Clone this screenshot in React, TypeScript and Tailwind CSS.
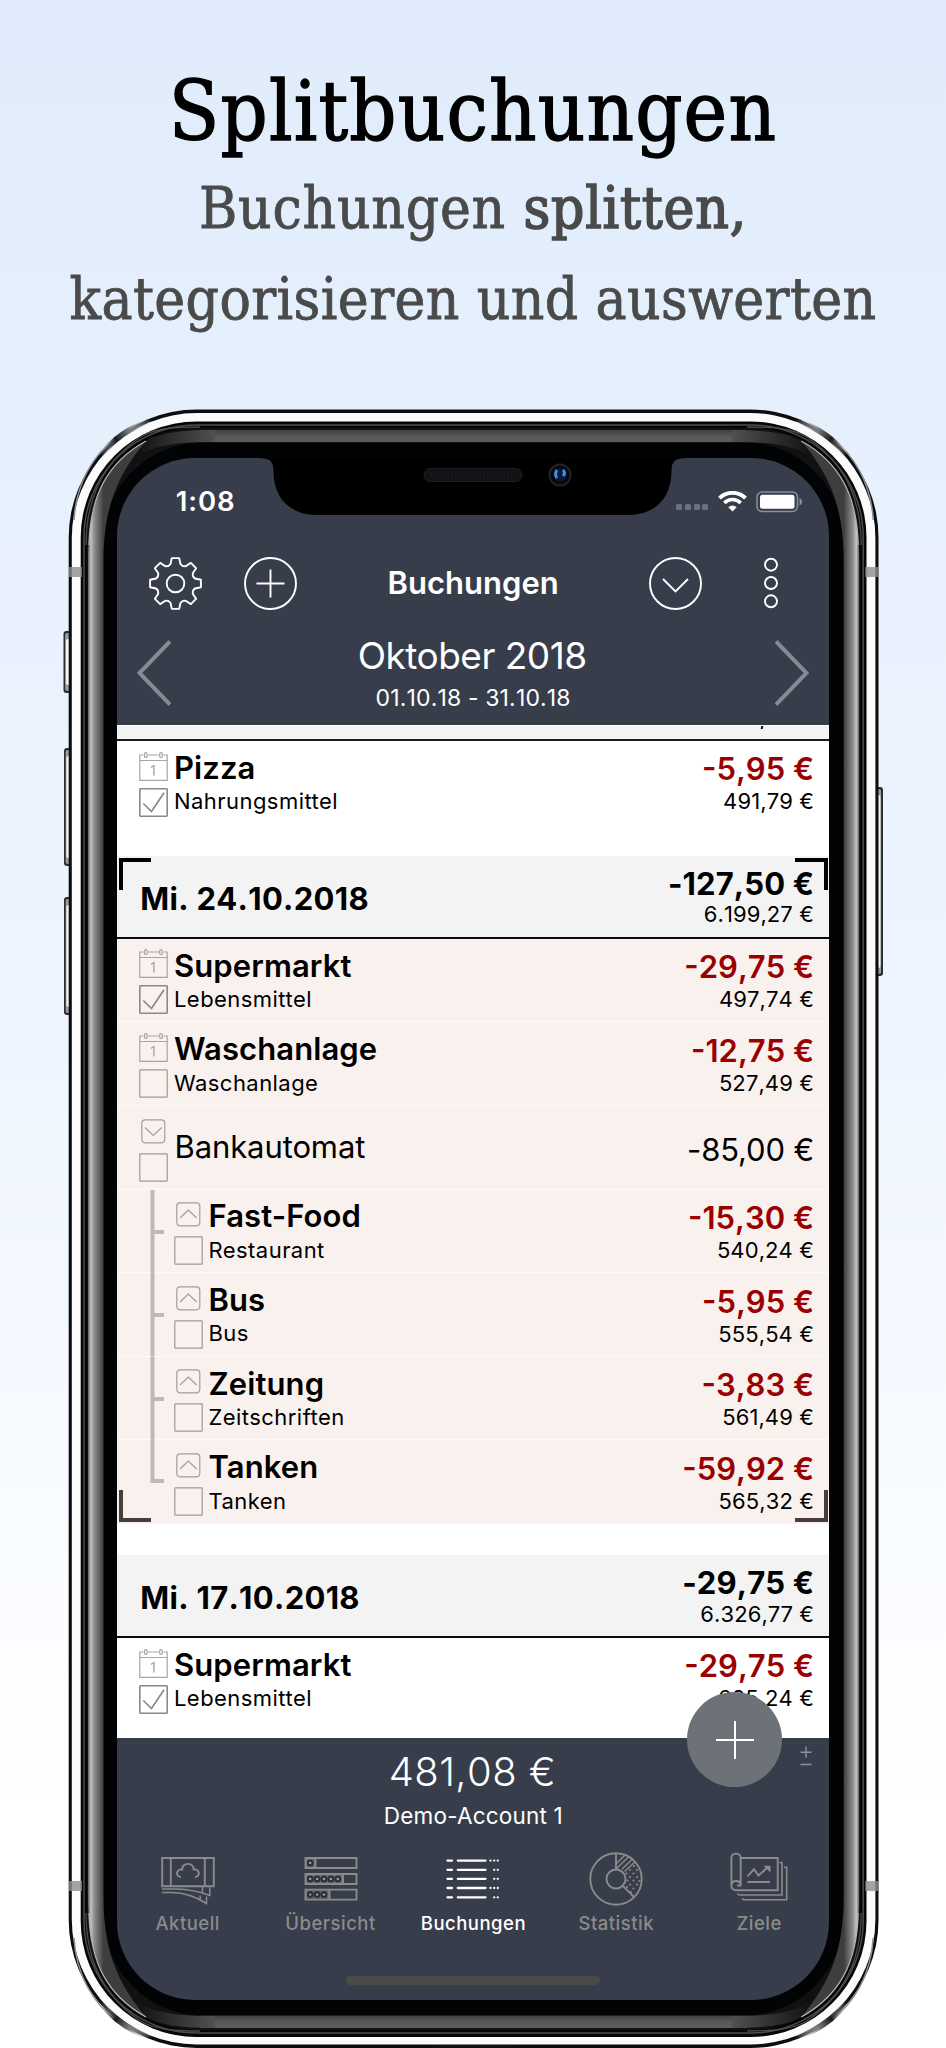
import type { ReactNode } from "react";

type IconKind = "calendar" | "down" | "up";

interface Booking {
  title: string;
  category?: string;
  amount: string;
  balance?: string;
  icon: IconKind;
  checked?: boolean;
  child?: boolean;
  last?: boolean;
}

const bookings: Booking[] = [
  { title: "Supermarkt", category: "Lebensmittel", amount: "-29,75 €", balance: "497,74 €", icon: "calendar", checked: true },
  { title: "Waschanlage", category: "Waschanlage", amount: "-12,75 €", balance: "527,49 €", icon: "calendar" },
  { title: "Bankautomat", amount: "-85,00 €", icon: "down" },
  { title: "Fast-Food", category: "Restaurant", amount: "-15,30 €", balance: "540,24 €", icon: "up", child: true },
  { title: "Bus", category: "Bus", amount: "-5,95 €", balance: "555,54 €", icon: "up", child: true },
  { title: "Zeitung", category: "Zeitschriften", amount: "-3,83 €", balance: "561,49 €", icon: "up", child: true },
  { title: "Tanken", category: "Tanken", amount: "-59,92 €", balance: "565,32 €", icon: "up", child: true, last: true },
];

function gearPath() {
  const pts: string[] = [];
  for (let i = 0; i < 8; i++) {
    const a = (i * Math.PI) / 4;
    for (const [x, y] of [[-7, -17.6], [-5, -19.4], [-3.7, -25.4], [3.7, -25.4], [5, -19.4], [7, -17.6]]) {
      pts.push(`${(x * Math.cos(a) - y * Math.sin(a)).toFixed(2)} ${(x * Math.sin(a) + y * Math.cos(a)).toFixed(2)}`);
    }
  }
  return `M${pts.join("L")}Z`;
}

function FrameCorner() {
  return (
    <g>
      <path d="M74 520 C76 485 92 455 118 436" fill="none" stroke="#8d8f90" strokeWidth="1.500" />
      <path d="M101 456 C112 440 128 428 152 420" fill="none" stroke="url(#streak)" strokeWidth="6" />
      <path d="M86 545 C86 500 102 462 142 436 C158 428 175 427 200 427" fill="none" stroke="#4c4d4e" strokeWidth="1.3" />
      <path d="M146 441 C160 433 180 430 215 430 V442 C180 442 160 444 138 455 Z" fill="url(#fade)" />
      <path d="M88 561 C88 500 106 462 146 441 C122 470 103.500 500 103.500 561 Z" fill="url(#side)" />
      <path d="M146 441 C108 462 90 495 89 545" fill="none" stroke="#b4b5b6" strokeWidth="1.200" />
      <rect x="69" y="567" width="13" height="10" fill="#8f8f8f" opacity="0.8" />
    </g>
  );
}

function SideButton({ x, y, height }: { x: number; y: number; height: number }) {
  return (
    <g>
      <rect x={x} y={y} width="9" height={height} rx="3" fill="#2a2b2c" />
      <rect x={x + 1.6} y={y + 2} width="5.5" height={height - 4} rx="2" fill="#9a9b9c" />
      <rect x={x + 2.4} y={y + 8} width="4" height={height - 16} rx="2" fill="#f4f4f4" />
    </g>
  );
}

function PhoneFrame() {
  return (
    <svg className="absolute inset-0" width="946" height="2048" viewBox="0 0 946 2048">
      <defs>
        <linearGradient id="side" gradientUnits="userSpaceOnUse" x1="88" x2="103.500" y1="0" y2="0">
          <stop offset="0" stopColor="#5c5d5e" />
          <stop offset="0.18" stopColor="#c2c3c4" />
          <stop offset="0.4" stopColor="#8d8e8f" />
          <stop offset="1" stopColor="#3c3e40" />
        </linearGradient>
        <linearGradient id="top" x1="0" x2="0" y1="0" y2="1">
          <stop offset="0" stopColor="#3f4041" />
          <stop offset="0.5" stopColor="#565758" />
          <stop offset="1" stopColor="#5d5e5f" />
        </linearGradient>
        <linearGradient id="fade" x1="0" x2="1" y1="0" y2="0">
          <stop offset="0" stopColor="#121314" />
          <stop offset="1" stopColor="#4f5051" />
        </linearGradient>
        <linearGradient id="streak" gradientUnits="userSpaceOnUse" x1="101" x2="152" y1="456" y2="420">
          <stop offset="0" stopColor="#fff" stopOpacity="0" />
          <stop offset="0.35" stopColor="#1a1b1c" />
          <stop offset="0.6" stopColor="#77797a" />
          <stop offset="1" stopColor="#fff" stopOpacity="0" />
        </linearGradient>
      </defs>
      <SideButton x={63.5} y={631} height={62} />
      <SideButton x={64} y={748} height={118} />
      <SideButton x={64} y={897} height={118} />
      <SideButton x={874} y={787} height={189} />
      <rect x="68.700" y="409.500" width="809.800" height="1638.500" rx="128" fill="#0c0d0e" />
      <rect x="71.800" y="413" width="803.600" height="1631.500" rx="125" fill="#fbfbfb" />
      <rect x="80.700" y="421.500" width="785.800" height="1615.500" rx="116" fill="#050606" />
      <rect x="84" y="425" width="779.200" height="1608" rx="112" fill="none" stroke="#4c4d4e" strokeWidth="1.500" />
      <rect x="87" y="428" width="773.200" height="1602" rx="110" fill="#101112" />
      <rect x="200" y="430" width="547" height="12.500" fill="url(#top)" />
      <rect x="200" y="2015.500" width="547" height="12.500" fill="url(#top)" />
      <rect x="103" y="442.300" width="741.200" height="1573" rx="100" fill="#020305" />
      <rect x="88" y="560" width="15.500" height="1338" fill="url(#side)" />
      <g transform="translate(947.2 0) scale(-1 1)">
        <rect x="88" y="560" width="15.500" height="1338" fill="url(#side)" />
        <FrameCorner />
      </g>
      <FrameCorner />
      <g transform="translate(0 2458) scale(1 -1)">
        <FrameCorner />
      </g>
      <g transform="translate(947.2 2458) scale(-1 -1)">
        <FrameCorner />
      </g>
      <path d="M430 2048 q2 -3 8 -3 h71 q6 0 8 3 Z" fill="#111" />
    </svg>
  );
}

function Notch() {
  return (
    <svg className="absolute left-[137px] top-[-1px]" width="438" height="60" viewBox="254.500 457 438 60">
      <path
        d="M259 457 V458 C270 458 274 461 274 471 C274 498 290 515 318 515 H628 C656 515 672 498 672 471 C672 461 676 458 687 458 V457 Z"
        fill="#000"
      />
      <rect x="424.500" y="468.500" width="98" height="13" rx="6.500" fill="#111214" stroke="#1f2023" />
      <path d="M431 475 H516" stroke="#16171a" strokeWidth="7" strokeDasharray="1.500 2" />
      <circle cx="560.500" cy="475" r="10.500" fill="#07080b" stroke="#232427" strokeWidth="2" />
      <circle cx="560.500" cy="475" r="6.500" fill="#0b1a38" />
      <path d="M557.500 470 Q554.500 474 557.500 478 M563.500 470 Q566.500 473 563.500 476" stroke="#3f8fe8" strokeWidth="3" fill="none" />
    </svg>
  );
}

function StatusBar() {
  return (
    <div className="flex h-[85px] items-center pl-[58.5px] pr-[26.5px] text-white">
      <span className="pt-px text-[27.5px] font-semibold tracking-[0.9px]">1:08</span>
      <div className="ml-auto mt-[13px] flex gap-[2.8px]">
        {[0, 1, 2, 3].map((i) => (
          <span key={i} className="h-[6px] w-[6px] rounded-[1.5px] bg-[#6b707a]" />
        ))}
      </div>
      <svg className="ml-[9.5px] mt-[2px]" width="29" height="21" viewBox="0 0 29 21" fill="none" stroke="#fff">
        <path d="M1.500 7.200 A18.500 18.500 0 0 1 27.500 7.200" strokeWidth="4" />
        <path d="M6.300 12 A11.500 11.500 0 0 1 22.700 12" strokeWidth="3.600" />
        <path d="M10.300 16.200 Q14.500 12.800 18.700 16.200 L14.500 20.500 Z" fill="#fff" stroke="none" />
      </svg>
      <svg className="ml-[9px] mt-[2px]" width="47" height="22" viewBox="0 0 47 22">
        <rect x="1" y="1" width="40.500" height="19.500" rx="5" fill="none" stroke="#8b9099" strokeWidth="1.500" />
        <rect x="4" y="3.800" width="34.500" height="14" rx="2.500" fill="#fff" />
        <path d="M43.500 7 Q46.200 8 46.200 10.800 Q46.200 13.500 43.500 14.500 Z" fill="#8b9099" />
      </svg>
    </div>
  );
}

function Toolbar() {
  return (
    <div className="flex h-[80px] items-center pl-[32px] text-white">
      <svg width="53" height="53" viewBox="-26.500 -26.500 53 53" fill="none" stroke="#fff" strokeWidth="1.900" strokeLinejoin="round">
        <path d={gearPath()} />
        <circle r="8.800" />
      </svg>
      <svg className="ml-[42px]" width="53" height="53" viewBox="-26.500 -26.500 53 53" fill="none" stroke="#fff" strokeWidth="1.900">
        <circle r="25.500" />
        <path d="M-14 0 H14 M0 -14 V14" />
      </svg>
      <h2 className="flex-1 text-center text-[31px] font-semibold">Buchungen</h2>
      <svg width="53" height="53" viewBox="-26.500 -26.500 53 53" fill="none" stroke="#fff" strokeWidth="1.900">
        <circle r="25.500" />
        <path d="M-12.500 -4.500 L0 8 L12.500 -4.500" />
      </svg>
      <svg className="ml-[61px] mr-[50.5px]" width="16" height="54" viewBox="-8 -27 16 54" fill="none" stroke="#fff" strokeWidth="1.900">
        <circle cy="-18.300" r="6" />
        <circle r="6" />
        <circle cy="18.300" r="6" />
      </svg>
    </div>
  );
}

function MonthBar() {
  return (
    <div className="flex h-[102px] justify-between pl-[19.5px] pr-[20px] text-white">
      <svg className="mt-[17px]" width="34" height="66" viewBox="0 0 34 66" fill="none" stroke="#868a93" strokeWidth="4">
        <path d="M33 1.500 L2.500 33 L33 64.500" />
      </svg>
      <div className="pt-[11px] text-center">
        <div className="-translate-x-[1px] text-[37px] leading-[44px] tracking-[-0.5px]">Oktober 2018</div>
        <div className="mt-[6px] text-[23px] leading-[28px] tracking-[0.15px] [font-kerning:none]">01.10.18 - 31.10.18</div>
      </div>
      <svg className="mt-[17px]" width="34" height="66" viewBox="0 0 34 66" fill="none" stroke="#868a93" strokeWidth="4">
        <path d="M1 1.500 L31.500 33 L1 64.500" />
      </svg>
    </div>
  );
}

function RowIcon({ kind }: { kind: IconKind }) {
  if (kind === "calendar") {
    return (
      <svg width="29" height="29" viewBox="0 0 29 29" fill="none" stroke="#a9a5a4" strokeWidth="1.200">
        <path d="M4.500 3 H0.800 V28.300 H28.200 V3 H24.500 M9 3 H19.800 M0.800 8.500 H28.200" />
        <rect x="5.500" y="0.700" width="2.600" height="4.800" rx="1.300" />
        <rect x="20.700" y="0.700" width="2.600" height="4.800" rx="1.300" />
        <path d="M12 15.300 L14.900 13.600 V23.500" strokeWidth="1.400" />
      </svg>
    );
  }
  return (
    <svg width="29" height="29" viewBox="0 0 29 29" fill="none" stroke="#a19d9c" strokeWidth="1.200">
      <rect x="2.800" y="2.800" width="23" height="23" rx="3.500" />
      {kind === "down" ? <path d="M6 10.500 L14.300 18.500 L22.700 10.500" /> : <path d="M6 18 L14.300 10 L22.700 18" />}
    </svg>
  );
}

function Checkbox({ checked }: { checked?: boolean }) {
  return (
    <svg className="mt-[7px]" width="29" height="29" viewBox="0 0 29 29" fill="none" stroke={checked ? "#8b8888" : "#9d9998"}>
      <rect x="0.800" y="0.800" width="27.400" height="27.400" rx="0.600" strokeWidth={checked ? 1.6 : 1.2} />
      {checked && <path d="M4.300 15.500 L12.500 23.500 L25 4.800" strokeWidth="1.700" />}
    </svg>
  );
}

function BookingRow({ title, category, amount, balance, icon, checked, child, last }: Booking) {
  return (
    <div className="flex h-[83.6px] pl-[22.2px] pr-[15.5px]">
      {child && (
        <svg width="34.500" height="83.600" viewBox="0 0 34.500 83.600" fill="none" stroke="#c2b7b5" strokeWidth="4">
          {last ? <path d="M13.500 0 V41 H25" /> : <path d="M13.500 0 V83.600 M13.500 42 H25" />}
        </svg>
      )}
      <div className="w-[29px] shrink-0 pt-[10.6px]">
        <RowIcon kind={icon} />
        <Checkbox checked={checked} />
      </div>
      {category ? (
        <div className="ml-[5.5px] pt-[8.7px]">
          <div className="text-[31px] font-semibold leading-[36px] tracking-[0.1px]">{title}</div>
          <div className="mt-[1.4px] text-[22px] leading-[28px] tracking-[0.45px]">{category}</div>
        </div>
      ) : (
        <div className="ml-[6px] pt-[23.3px] text-[31px] leading-[36px] tracking-[-0.1px]">{title}</div>
      )}
      {balance ? (
        <div className="ml-auto pt-[10.4px] text-right [font-kerning:none]">
          <div className="text-[31px] font-semibold leading-[36px] text-[#9a0000]">{amount}</div>
          <div className="text-[22px] leading-[28px] tracking-[0.1px]">{balance}</div>
        </div>
      ) : (
        <div className="ml-auto pt-[26px] text-[31px] leading-[36px] tracking-[-0.15px]">{amount}</div>
      )}
    </div>
  );
}

function DayHeader({ date, total, balance }: { date: string; total: string; balance: string }) {
  return (
    <div className="flex h-[82.6px] justify-between border-b-2 border-[#0b0c0d] bg-[#f3f3f3] pl-[23px] pr-[15.5px] [font-kerning:none]">
      <div className="pt-[25px] text-[31px] font-bold leading-[36px] tracking-[0.3px]">{date}</div>
      <div className="pt-[10px] text-right">
        <div className="text-[31px] font-bold leading-[36px] tracking-[0.1px]">{total}</div>
        <div className="mt-[-1.8px] text-[22px] leading-[28px] tracking-[0.1px]">{balance}</div>
      </div>
    </div>
  );
}

function Separators({ children }: { children: ReactNode }) {
  return <div className="divide-y divide-white/70 bg-[#f9f1ee]">{children}</div>;
}

function dots(count: number, y: number) {
  return Array.from({ length: count }, (_, i) => (
    <g key={i} stroke="none">
      <circle cx={9.2 + i * 6.9} cy={y} r="3.500" fill="#2b313d" />
      <circle cx={9.2 + i * 6.9} cy={y} r="1.200" fill="#a0a0a0" />
    </g>
  ));
}

const tabs = [
  {
    label: "Aktuell",
    icon: (
      <>
        <path d="M4.200 9 H55.800 V37.300 H4.200 Z M12.800 9 V37.300 M46.800 9 V37.300" />
        <path d="M22.800 28.200 C17 27.500 18.300 19.500 24.200 20.500 C24 13 35.500 13 35.700 20.500 C41.500 19.500 43 27.500 37 28.200" />
        <path d="M4 40 H18 Q36 40.500 51.800 46.500 V38.600 M44.500 38 V43.800 M4 43.600 H14 Q32 44 48.500 54.500 V47.500 M42.200 46.500 V50.500" strokeWidth="1.500" />
      </>
    ),
  },
  {
    label: "Übersicht",
    icon: (
      <>
        <path d="M5 10 H14 V18 H5 Z M5 26 H41.500 V34 H5 Z M5 41.600 H28 V49.600 H5 Z" fill="#6a6d72" stroke="none" />
        {dots(1, 14)}
        {dots(5, 30)}
        {dots(3, 45.6)}
        <path d="M4.500 9 H55.500 V19 H4.500 Z M4.500 25 H55.500 V35 H4.500 Z M4.500 40.600 H55.500 V50.600 H4.500 Z M14.500 9 V19 M42 25 V35 M28.500 40.600 V50.600" />
      </>
    ),
  },
  {
    label: "Buchungen",
    icon: (
      <g strokeWidth="2.300" strokeLinecap="round">
        {[11.6, 20.8, 29.8, 39, 48.3].map((y, i) => (
          <g key={y}>
            <path d={`M4.500 ${y} H9 M14.800 ${y} H42.500`} />
            <path d={i % 3 === 0 ? `M47.500 ${y} h0.010 M51.200 ${y} h0.010 M54.800 ${y} h0.010` : `M51.200 ${y} h0.010 M54.800 ${y} h0.010`} />
          </g>
        ))}
      </g>
    ),
  },
  {
    label: "Statistik",
    icon: (
      <>
        <circle cx="30" cy="30" r="25.700" />
        <circle cx="30" cy="30" r="9.500" />
        <path d="M30 4.300 V20.500 M36.800 36.800 L48 48" />
        <path d="M30.500 14.500 L38.500 6.500 M30.500 19.500 L42.500 8 M36 20 L46 10.500 M38.500 22.500 L49.500 12.500" strokeWidth="1.500" />
        <g stroke="none" fill="#8b8b8b">
          {[[48, 17], [44, 21], [51, 21], [40.5, 24.5], [47.5, 24.5], [44, 28], [51, 28], [41.5, 31.5], [47.5, 31.5], [44, 35.5], [51, 35.5], [41, 38], [47.5, 39.5], [45, 43], [53.5, 32]].map(([x, y]) => (
            <circle key={`${x}-${y}`} cx={x} cy={y} r="1.100" />
          ))}
        </g>
      </>
    ),
  },
  {
    label: "Ziele",
    icon: (
      <>
        <path d="M11.700 9 H48.700 V41.300 H7 Q2.400 41.300 2.400 36 V9.500 Q2.400 4.600 7 4.600 Q11.700 4.600 11.700 9.500 V36.500 M2.400 37 Q2.400 32 7 32 Q11.700 32 11.700 36.500 H8" />
        <path d="M8.400 44.500 L10 46 H53 V13.600 H50.500 M13 49.300 L14.500 50.800 H57.700 V18.300 H55" strokeWidth="1.600" />
        <path d="M18.400 27.300 L25 20.300 L29.500 26.500 L39 18 M18.400 33 H41" />
        <path d="M34.500 16.800 H41.500 V23.500 Z" fill="#8b8b8b" stroke="none" />
      </>
    ),
  },
];

function TabBar() {
  return (
    <nav className="-mx-px mt-[19px] flex">
      {tabs.map(({ label, icon }) => {
        const active = label === "Buchungen";
        return (
          <div key={label} className={`flex flex-1 flex-col items-center ${active ? "text-white" : "text-[#8b8b8b]"}`}>
            <svg width="60" height="60" viewBox="0 0 60 60" fill="none" stroke="currentColor" strokeWidth="1.900">
              {icon}
            </svg>
            <span className="mt-[2px] text-[18.5px] font-medium leading-[24px] tracking-[0.5px]">{label}</span>
          </div>
        );
      })}
    </nav>
  );
}

export default function App() {
  return (
    <div className="relative h-[2048px] w-[946px] overflow-hidden bg-[linear-gradient(180deg,#e0ecfb_0%,#e6f0fd_20%,#edf4ff_45%,#f6faff_68%,#ffffff_88%)] font-['Inter','Liberation_Sans',sans-serif] text-black">
      <PhoneFrame />

      <header className="h-[458.3px] pt-[62px] text-center font-['DejaVu_Serif_Condensed','DejaVu_Serif','Liberation_Serif',serif] [font-stretch:condensed]">
        <h1 className="whitespace-nowrap text-[82px] leading-[100px] tracking-[1.2px] [-webkit-text-stroke:1.3px_black]">Splitbuchungen</h1>
        <p className="mt-px whitespace-nowrap text-[58px] leading-[91px] tracking-[0.4px] text-[#4a4a4a] [-webkit-text-stroke:0.8px_#4a4a4a]">
          <span className="tracking-[0.8px]">
            Buchungen <span className="[-webkit-text-stroke:1.6px_#4a4a4a]">splitten,</span>
          </span>
          <br />
          kategorisieren und auswerten
        </p>
      </header>

      <main className="relative ml-[117.3px] flex h-[1542px] w-[712.2px] flex-col overflow-hidden rounded-[78px] bg-[#373d4b]">
        <Notch />
        <StatusBar />
        <Toolbar />
        <MonthBar />

        <section className="h-[1012.7px] shrink-0 overflow-hidden bg-white">
          <div className="flex h-[15.7px] justify-end border-b-2 border-t border-b-[#1b1b1c] border-t-white bg-[#f3f3f3] pr-[67px]">
            <span className="h-[3px] w-[1.5px] -skew-x-12 bg-black" />
          </div>
          <BookingRow title="Pizza" category="Nahrungsmittel" amount="-5,95 €" balance="491,79 €" icon="calendar" checked />
          <div className="h-[31.7px]" />

          <div className="relative">
            <DayHeader date="Mi. 24.10.2018" total="-127,50 €" balance="6.199,27 €" />
            <Separators>
              {bookings.map((b) => (
                <div key={b.title} className="h-[83.6px]">
                  <BookingRow {...b} />
                </div>
              ))}
            </Separators>
            <span className="absolute left-[1.5px] top-[1.6px] h-[32px] w-[32.5px] border-l-4 border-t-4 border-black" />
            <span className="absolute right-[1.5px] top-[1.6px] h-[32px] w-[32.5px] border-r-4 border-t-4 border-black" />
            <span className="absolute bottom-[1.6px] left-[1.5px] h-[32px] w-[32.5px] border-b-4 border-l-4 border-[#4a3e3d]" />
            <span className="absolute bottom-[1.6px] right-[1.5px] h-[32px] w-[32.5px] border-b-4 border-r-4 border-[#4a3e3d]" />
          </div>
          <div className="h-[31.4px]" />

          <DayHeader date="Mi. 17.10.2018" total="-29,75 €" balance="6.326,77 €" />
          <BookingRow title="Supermarkt" category="Lebensmittel" amount="-29,75 €" balance="625,24 €" icon="calendar" checked />
        </section>

        <footer className="relative flex-1 text-white">
          <div className="pt-[10px] text-center">
            <div className="-translate-x-[1px] text-[40px] font-light leading-[48px] tracking-[0.4px] [font-kerning:none]">481,08 €</div>
            <div className="mt-[6px] text-[22.5px] leading-[28px] tracking-[0.2px]">Demo-Account 1</div>
          </div>
          <button className="absolute right-[47.3px] top-[-45.5px] flex h-[95px] w-[95px] items-center justify-center rounded-full bg-[#6d7279]">
            <svg width="40" height="40" viewBox="-20 -20 40 40" stroke="#fff" strokeWidth="2">
              <path d="M-19 0 H19 M0 -19 V19" />
            </svg>
          </button>
          <svg className="absolute right-[17.5px] top-[8px]" width="12" height="22" viewBox="0 0 12 22" stroke="#8e9299" strokeWidth="1.400">
            <path d="M0.500 6.200 H11.500 M6 0.700 V11.700 M0.500 18.500 H11.500" />
          </svg>
          <TabBar />
          <div className="mx-auto mt-[41px] h-[9px] w-[254px] rounded-full bg-[#4a4a4a]" />
        </footer>
      </main>
    </div>
  );
}
